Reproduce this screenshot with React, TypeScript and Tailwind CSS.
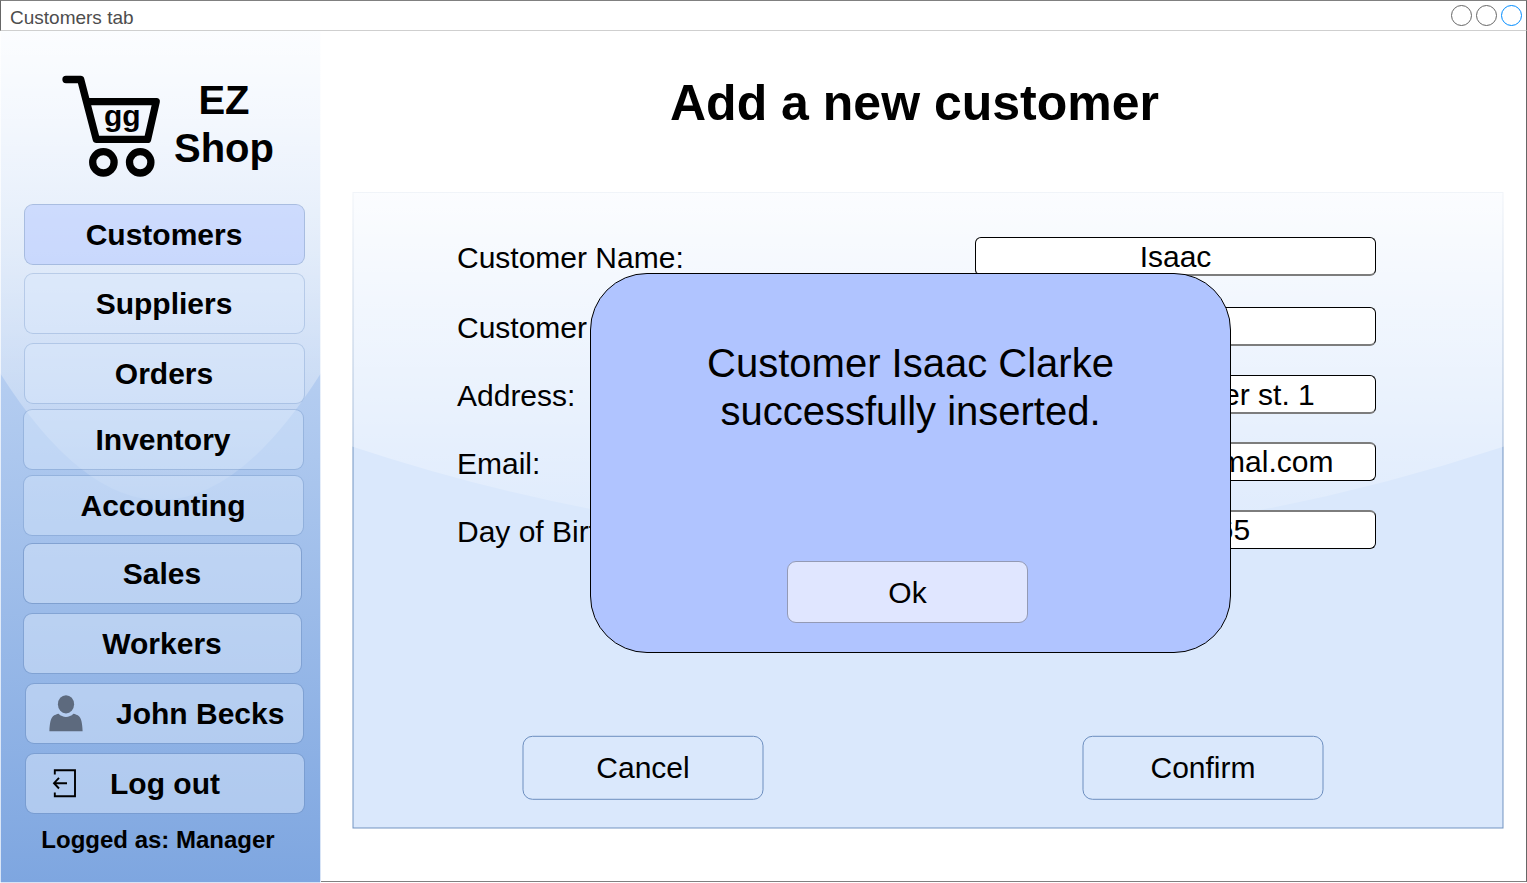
import React from "react";

type NavItem = { label: string; className: string };

const navItems: NavItem[] = [
  { label: "Customers", className: "ml-6 w-[281px] border-[#7f9bcf]/60 bg-[#b1c5ff]/50 pr-px" },
  { label: "Suppliers", className: "ml-6 mt-2 w-[281px] border-[#7f9fd0]/40 bg-[#dae8fc]/50 pr-px" },
  { label: "Orders", className: "ml-6 mt-[9px] w-[281px] border-[#7f9fd0]/40 bg-[#dae8fc]/50 pr-px" },
  { label: "Inventory", className: "ml-[23px] mt-[5px] w-[281px] border-[#6c8ebf]/35 bg-[#dae8fc]/45 pr-px" },
  { label: "Accounting", className: "ml-[23px] mt-[5px] w-[281px] border-[#6c8ebf]/35 bg-[#dae8fc]/45 pr-px" },
  { label: "Sales", className: "ml-[23px] mt-[7px] w-[279px] border-[#6c8ebf]/60 bg-[#dae8fc]/50 pr-px" },
  { label: "Workers", className: "ml-[23px] mt-[9px] w-[279px] border-[#6c8ebf]/50 bg-[#dae8fc]/50 pr-px" },
];

const navButton =
  "flex h-[61px] shrink-0 items-center rounded-[9px] border bg-clip-padding text-[30px] leading-9 font-bold";

type Field = { label: string; value: string; className: string; labelClass: string; inputClass: string };

const thickBottom = "border-b-2 border-b-[#7d7d7d] pt-px";
const thickTop = "border-t-2 border-t-[#7d7d7d]";

const fields: Field[] = [
  { label: "Customer Name:", value: "Isaac", className: "", labelClass: "pt-[3px]", inputClass: thickBottom },
  { label: "Customer Surname:", value: "Clarke", className: "mt-[31px]", labelClass: "pt-[3px]", inputClass: thickBottom },
  { label: "Address:", value: "Space Engineer st. 1", className: "mt-[29px]", labelClass: "pt-[3px]", inputClass: thickBottom },
  { label: "Email:", value: "isaac.clarke@gmal.com", className: "mt-7", labelClass: "pt-1", inputClass: `${thickTop} pr-[3px]` },
  { label: "Day of Birth:", value: "05/06/2465", className: "mt-[29px]", labelClass: "pt-1", inputClass: `${thickTop} pr-px` },
];

function CartLogo() {
  return (
    <svg className="ml-[60px] mt-[39px] h-[112px] w-[102px] shrink-0" viewBox="60 70 102 112" fill="none" stroke="#000" strokeWidth="7.3">
      <path d="M66 79.5H80.7L96.3 139.4H147.6L156.2 101.6H87" strokeLinecap="round" strokeLinejoin="round" />
      <circle cx="103.4" cy="162.3" r="10.7" />
      <circle cx="140.2" cy="162.3" r="10.7" />
      <text x="122.3" y="126" textAnchor="middle" fill="#000" stroke="none" fontSize="30" fontWeight="700">
        gg
      </text>
    </svg>
  );
}

function UserIcon() {
  return (
    <svg className="ml-[22px] mb-px h-[38px] w-9 shrink-0" viewBox="48 694 36 38" fill="#5d6a7e">
      <ellipse cx="66" cy="704.3" rx="8.1" ry="9.1" />
      <path d="M49.4 731.3C49.6 724 50.6 718.5 53 716.3C54.5 714.9 56.8 714.2 58.6 713.8C62.5 718 69.5 718 73.4 713.8C75.2 714.2 77.5 714.9 79 716.3C81.4 718.5 82.4 724 82.6 731.3Z" />
    </svg>
  );
}

function LogoutIcon() {
  return (
    <svg className="ml-[25px] h-[32px] w-7 shrink-0" viewBox="51 767.5 28 32" fill="none" stroke="#000" strokeWidth="1.9">
      <path d="M54.8 774V769.8H75V795.7H54.8V792" />
      <path d="M67 782.7H54.2M59 777.4L54 782.7L59 788" />
    </svg>
  );
}

function SidebarBackground() {
  return (
    <svg className="absolute inset-0 h-[852px] w-[321px]" viewBox="0 0 321 852">
      <defs>
        <linearGradient id="sideFill" x1="0" y1="0" x2="0" y2="1">
          <stop offset="0" stopColor="#dae8fc" />
          <stop offset="1" stopColor="#7ea6e0" />
        </linearGradient>
        <linearGradient id="gloss" x1="0" y1="0" x2="0" y2="1">
          <stop offset="0" stopColor="#fff" stopOpacity="0.9" />
          <stop offset="1" stopColor="#fff" stopOpacity="0.1" />
        </linearGradient>
      </defs>
      <rect width="321" height="852" fill="#fff" />
      <rect x="0.7" y="0" width="319.6" height="851.3" fill="url(#sideFill)" />
      <path d="M0 0V342Q160.500 596 321 342V0Z" fill="url(#gloss)" />
    </svg>
  );
}

function Sidebar() {
  return (
    <aside className="relative flex h-[852px] w-[321px] shrink-0 flex-col">
      <SidebarBackground />
      <div className="relative flex h-[173px] shrink-0">
        <CartLogo />
        <div className="ml-[11px] mt-[45px] w-[102px] text-center text-[40px] leading-[48px] font-bold">
          EZ
          <br />
          Shop
        </div>
      </div>
      <nav className="relative flex flex-col">
        {navItems.map((item) => (
          <button key={item.label} className={`${navButton} justify-center ${item.className}`}>
            {item.label}
          </button>
        ))}
        <button className={`${navButton} ml-[25px] mt-[9px] w-[279px] border-[#6c8ebf]/50 bg-[#dae8fc]/50`}>
          <UserIcon />
          <span className="ml-8 whitespace-nowrap">John Becks</span>
        </button>
        <button className={`${navButton} ml-[25px] mt-[9px] w-[280px] border-[#6c8ebf]/50 bg-[#dae8fc]/50`}>
          <LogoutIcon />
          <span className="ml-[31px] whitespace-nowrap">Log out</span>
        </button>
      </nav>
      <p className="relative mt-3 w-[316px] text-center text-2xl leading-7 font-bold">Logged as: Manager</p>
    </aside>
  );
}

function PanelBackground() {
  return (
    <svg className="absolute inset-0 h-[637px] w-[1152px]" viewBox="0 0 1152 637">
      <rect x="1" y="0.5" width="1150" height="635.5" fill="#dae8fc" stroke="#6c8ebf" strokeOpacity="0.95" />
      <path d="M0 0V254.500Q576 445 1152 254.500V0Z" fill="url(#gloss)" />
    </svg>
  );
}

function FormButton({ children }: { children: React.ReactNode }) {
  return (
    <button type="button" className="relative h-[65px] w-[242px] pt-px">
      <svg className="absolute inset-0 h-[65px] w-[242px]" viewBox="0 0 242 65" fill="none">
        <rect x="1" y="1.3" width="240" height="63" rx="9.5" stroke="#6c8ebf" />
      </svg>
      {children}
    </button>
  );
}

function CustomerForm() {
  return (
    <section className="relative h-[637px] w-[1152px]">
      <PanelBackground />
      <form className="relative pt-[45px]">
        {fields.map((field) => (
          <div key={field.label} className={`flex h-[39px] pl-[105px] text-[30px] leading-9 ${field.className}`}>
            <label className={`w-[518px] ${field.labelClass}`}>{field.label}</label>
            <div
              className={`flex h-[39px] w-[401px] justify-center rounded-[6px] border border-black bg-white leading-[35px] whitespace-nowrap ${field.inputClass}`}
            >
              {field.value}
            </div>
          </div>
        ))}
        <div className="mt-[186px] flex justify-between pr-[180px] pl-[170px] text-[30px] leading-9">
          <FormButton>Cancel</FormButton>
          <FormButton>Confirm</FormButton>
        </div>
      </form>
    </section>
  );
}

function SuccessDialog() {
  return (
    <div
      role="dialog"
      className="absolute top-[273px] left-[590px] flex h-[380px] w-[641px] flex-col items-center rounded-[57px] border border-black bg-[#b0c4ff] pt-[65px]"
    >
      <p className="text-center text-[40px] leading-[48px]">
        Customer Isaac Clarke
        <br />
        successfully inserted.
      </p>
      <button className="mt-[126px] mr-[6px] h-[62px] w-[241px] rounded-[9px] border border-[#939ab5] bg-[#e0e6ff] pt-0.5 text-[30px] leading-9">
        Ok
      </button>
    </div>
  );
}

export default function App() {
  return (
    <div className="relative flex h-[883px] w-[1527px] flex-col overflow-hidden bg-white font-['Liberation_Sans',Arial,sans-serif] text-black">
      <header className="flex h-[31px] shrink-0 items-center justify-between border-t border-r border-b border-l border-t-[#808080] border-r-[#666] border-b-[#cfcfcf] border-l-[#666] pr-1 pl-[9px]">
        <span className="pt-1 text-[19px] leading-6 text-[#4d4d4d]">Customers tab</span>
        <div className="flex gap-1">
          <span className="size-[21px] rounded-full border border-[#666]" />
          <span className="size-[21px] rounded-full border border-[#666]" />
          <span className="size-[21px] rounded-full border border-[#008cff]" />
        </div>
      </header>
      <div className="flex h-[852px]">
        <Sidebar />
        <main className="flex h-[851px] w-[1206px] flex-col border-r border-b border-r-[#666] border-b-[#808080] pl-[31px]">
          <h1 className="mt-[42px] mb-[59px] pr-[49px] text-center text-[50px] leading-[60px] font-bold">Add a new customer</h1>
          <CustomerForm />
        </main>
      </div>
      <SuccessDialog />
    </div>
  );
}
